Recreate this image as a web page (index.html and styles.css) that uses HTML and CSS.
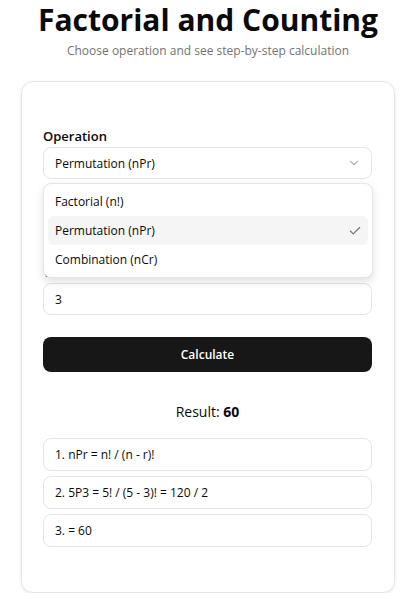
FILE: index.html
```html
<!DOCTYPE html>
<html lang="en">
<head>
  <meta charset="UTF-8">
  <meta name="viewport" content="width=device-width, initial-scale=1.0">
  <title>Factorial and Counting</title>
  <link rel="stylesheet" href="styles.css">
</head>
<body>
  <div class="page">
    <h1>Factorial and Counting</h1>
    <p class="subtitle">Choose operation and see step-by-step calculation</p>

    <div class="card">
      <div class="field">
        <label>Operation</label>
        <div class="select-wrap">
          <div class="select">
            <span>Permutation (nPr)</span>
            <svg class="chevron" width="14" height="14" viewBox="0 0 24 24" fill="none" stroke="currentColor" stroke-width="2" stroke-linecap="round" stroke-linejoin="round"><path d="m6 9 6 6 6-6"/></svg>
          </div>
          <ul class="menu">
            <li>Factorial (n!)</li>
            <li class="active">Permutation (nPr)
              <svg class="check" width="14" height="14" viewBox="0 0 24 24" fill="none" stroke="currentColor" stroke-width="2" stroke-linecap="round" stroke-linejoin="round"><path d="M20 6 9 17l-5-5"/></svg>
            </li>
            <li>Combination (nCr)</li>
          </ul>
        </div>
      </div>

      <div class="field hidden-under">
        <label>Value of n</label>
        <div class="input">5</div>
      </div>

      <div class="field">
        <label>Value of r</label>
        <div class="input">3</div>
      </div>

      <button class="calc">Calculate</button>

      <div class="result">Result: <b>60</b></div>

      <div class="steps">
        <div class="step">1. nPr = n! / (n - r)!</div>
        <div class="step">2. 5P3 = 5! / (5 - 3)! = 120 / 2</div>
        <div class="step">3. = 60</div>
      </div>
    </div>
  </div>
</body>
</html>
```

FILE: styles.css
```css
body {
  margin: 0;
  font-family: 'Open Sans', 'Noto Sans', sans-serif;
  background: #fff;
  color: #0a0a0a;
}
.page {
  width: 374px;
  margin-left: 21px;
}
h1 {
  margin: 0;
  font-size: 30px;
  line-height: 40px;
  font-weight: 700;
  text-align: center;
  white-space: nowrap;
}
.subtitle {
  margin: 2px 0 0;
  font-size: 12px;
  line-height: 18px;
  color: #737373;
  text-align: center;
}
.card {
  margin-top: 21px;
  border: 1px solid #e5e5e5;
  border-radius: 12px;
  box-shadow: 0 1px 3px rgba(0,0,0,0.1);
  padding: 45px 22px 45px 21px;
  display: flex;
  flex-direction: column;
}
.field {
  display: flex;
  flex-direction: column;
  gap: 2px;
  margin-bottom: 16px;
}
.field label {
  font-size: 13px;
  line-height: 18px;
  font-weight: 600;
}
.hidden-under {
  visibility: hidden;
}
.select-wrap {
  position: relative;
}
.select, .input {
  height: 32px;
  box-sizing: border-box;
  border: 1px solid #e5e5e5;
  border-radius: 8px;
  padding: 0 11px;
  font-size: 12px;
  display: flex;
  align-items: center;
  justify-content: space-between;
}
.select {
  padding-right: 10px;
}
.chevron {
  color: #b5b5b5;
}
.menu {
  position: absolute;
  top: 36px;
  left: 0;
  right: -1px;
  margin: 0;
  padding: 3px 4px;
  list-style: none;
  background: #fff;
  border: 1px solid #e5e5e5;
  border-radius: 8px;
  box-shadow: 0 4px 8px rgba(0,0,0,0.12);
  z-index: 2;
}
.menu li {
  height: 29px;
  padding: 0 6px 0 7px;
  border-radius: 6px;
  font-size: 12px;
  display: flex;
  align-items: center;
  justify-content: space-between;
}
.menu li.active {
  background: #f5f5f5;
}
.check {
  color: #737373;
}
.calc {
  margin-top: 6px;
  height: 35px;
  border: none;
  border-radius: 8px;
  background: #171717;
  color: #fff;
  font-family: inherit;
  font-size: 12px;
  font-weight: 600;
}
.result {
  margin-top: 30px;
  text-align: center;
  font-size: 14px;
  line-height: 20px;
}
.steps {
  margin-top: 16px;
  display: flex;
  flex-direction: column;
  gap: 5px;
}
.step {
  height: 33px;
  box-sizing: border-box;
  border: 1px solid #e5e5e5;
  border-radius: 8px;
  padding: 0 11px;
  display: flex;
  align-items: center;
  font-size: 12px;
}
```
